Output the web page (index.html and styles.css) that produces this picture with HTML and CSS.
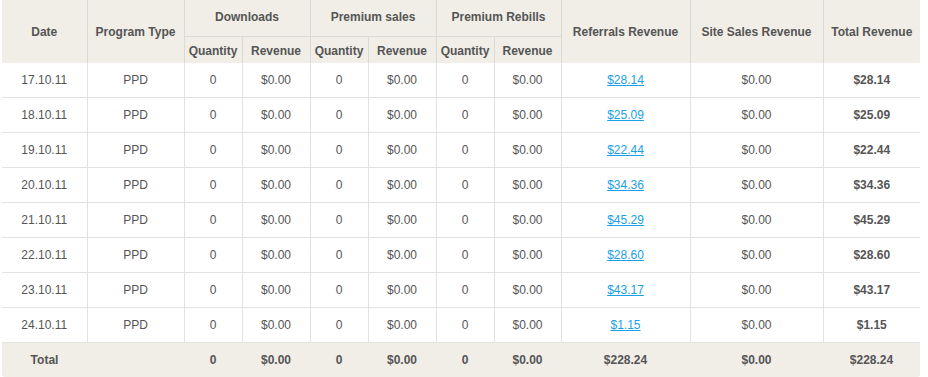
FILE: index.html
```html
<!DOCTYPE html>
<html>
<head>
<meta charset="utf-8">
<link rel="stylesheet" href="styles.css">
</head>
<body>
<div class="wrap">
<table class="stats">
<colgroup>
<col class="c-date"><col class="c-type"><col class="c-q"><col class="c-r"><col class="c-q"><col class="c-r"><col class="c-q"><col class="c-r2"><col class="c-ref"><col class="c-site"><col class="c-total">
</colgroup>
<thead>
<tr class="h1">
<th rowspan="2">Date</th>
<th rowspan="2">Program Type</th>
<th colspan="2" class="grp">Downloads</th>
<th colspan="2" class="grp">Premium sales</th>
<th colspan="2" class="grp">Premium Rebills</th>
<th rowspan="2">Referrals Revenue</th>
<th rowspan="2">Site Sales Revenue</th>
<th rowspan="2" class="last">Total Revenue</th>
</tr>
<tr class="h2">
<th>Quantity</th><th>Revenue</th><th>Quantity</th><th>Revenue</th><th>Quantity</th><th>Revenue</th>
</tr>
</thead>
<tbody>
<tr><td>17.10.11</td><td>PPD</td><td>0</td><td>$0.00</td><td>0</td><td>$0.00</td><td>0</td><td>$0.00</td><td><a href="#">$28.14</a></td><td>$0.00</td><td class="b last">$28.14</td></tr>
<tr><td>18.10.11</td><td>PPD</td><td>0</td><td>$0.00</td><td>0</td><td>$0.00</td><td>0</td><td>$0.00</td><td><a href="#">$25.09</a></td><td>$0.00</td><td class="b last">$25.09</td></tr>
<tr><td>19.10.11</td><td>PPD</td><td>0</td><td>$0.00</td><td>0</td><td>$0.00</td><td>0</td><td>$0.00</td><td><a href="#">$22.44</a></td><td>$0.00</td><td class="b last">$22.44</td></tr>
<tr><td>20.10.11</td><td>PPD</td><td>0</td><td>$0.00</td><td>0</td><td>$0.00</td><td>0</td><td>$0.00</td><td><a href="#">$34.36</a></td><td>$0.00</td><td class="b last">$34.36</td></tr>
<tr><td>21.10.11</td><td>PPD</td><td>0</td><td>$0.00</td><td>0</td><td>$0.00</td><td>0</td><td>$0.00</td><td><a href="#">$45.29</a></td><td>$0.00</td><td class="b last">$45.29</td></tr>
<tr><td>22.10.11</td><td>PPD</td><td>0</td><td>$0.00</td><td>0</td><td>$0.00</td><td>0</td><td>$0.00</td><td><a href="#">$28.60</a></td><td>$0.00</td><td class="b last">$28.60</td></tr>
<tr><td>23.10.11</td><td>PPD</td><td>0</td><td>$0.00</td><td>0</td><td>$0.00</td><td>0</td><td>$0.00</td><td><a href="#">$43.17</a></td><td>$0.00</td><td class="b last">$43.17</td></tr>
<tr><td>24.10.11</td><td>PPD</td><td>0</td><td>$0.00</td><td>0</td><td>$0.00</td><td>0</td><td>$0.00</td><td><a href="#">$1.15</a></td><td>$0.00</td><td class="b last">$1.15</td></tr>
</tbody>
<tfoot>
<tr><td>Total</td><td></td><td>0</td><td>$0.00</td><td>0</td><td>$0.00</td><td>0</td><td>$0.00</td><td>$228.24</td><td>$0.00</td><td>$228.24</td></tr>
</tfoot>
</table>
</div>
</body>
</html>
```
FILE: styles.css
```css
html, body {
  margin: 0;
  padding: 0;
  background: #fff;
}
.wrap {
  padding-left: 2px;
}
.stats {
  width: 918px;
  table-layout: fixed;
  border-collapse: collapse;
  font-family: "Liberation Sans", Arial, sans-serif;
  font-size: 12px;
  color: #555;
}
.c-date { width: 85px; }
.c-type { width: 97px; }
.c-q { width: 58px; }
.c-r { width: 68px; }
.c-r2 { width: 67px; }
.c-ref { width: 129px; }
.c-site { width: 133px; }
.c-total { width: 97px; }

.stats th {
  background: #f0eee7;
  font-weight: bold;
  color: #555;
  padding: 0;
  text-align: center;
  border-left: 1px solid #dcdad4;
  border-right: 1px solid #dcdad4;
}
.stats th:first-child { border-left: none; }
.stats th.last { border-right: none; }
.stats .h1 th { height: 34px; }
.stats .h1 th.grp { height: 34px; border-bottom: 1px solid #dcdad4; padding-bottom: 2px; }
.stats .h2 th { height: 25px; padding-top: 1px; }

.stats td {
  padding: 0;
  text-align: center;
  height: 34px;
  border: 1px solid #e2e2e2;
  border-top: none;
}
.stats tbody td:first-child { border-left: none; }
.stats tbody td.last { border-right: none; }
.stats td.b { font-weight: bold; }
.stats a {
  color: #1aa0e6;
  text-decoration: underline;
}
.stats tfoot td {
  background: #f0eee7;
  font-weight: bold;
  border: none;
  height: 34px;
}
.stats tfoot tr td:first-child { border-bottom-left-radius: 3px; }
.stats tfoot tr td:last-child { border-bottom-right-radius: 3px; }
```
